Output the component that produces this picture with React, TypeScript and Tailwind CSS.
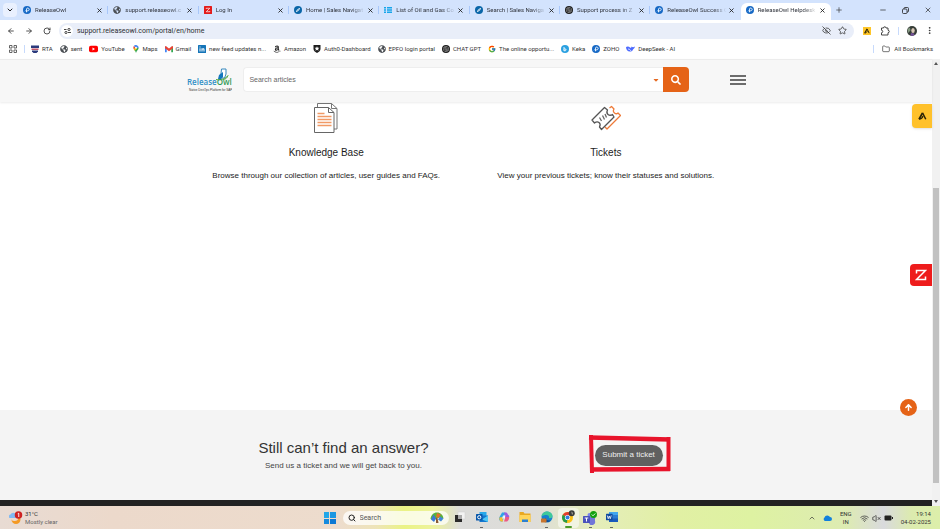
import type { ReactNode } from 'react';
import {
  ArrowLeft,
  ArrowRight,
  ArrowUp,
  ChevronDown,
  ChevronUp,
  EyeOff,
  Folder,
  Minus,
  MoreVertical,
  Plus,
  RotateCw,
  Search,
  Star,
  VolumeX,
  Wifi,
  X,
} from 'lucide-react';
import { FcGoogle } from 'react-icons/fc';
import { FaAmazon, FaCaretDown, FaGlobeAmericas, FaSearch } from 'react-icons/fa';
import { SiOpenai } from 'react-icons/si';

const UI = 'font-[Roboto,sans-serif]';
const ARIAL = "font-['Liberation_Sans',Arial,sans-serif]";

/* ---------- site icons ---------- */

function OwlIcon() {
  return (
    <svg viewBox="0 0 16 16" className="size-2 shrink-0">
      <circle cx="8" cy="8" r="8" fill="#1769c5" />
      <path d="M7 12.500V5.500a2.800 2.800 0 1 1 2.500 4.200H7" fill="none" stroke="#fff" strokeWidth="1.800" />
      <path d="M4 11l3-4" stroke="#9fd0ff" strokeWidth="1.500" />
    </svg>
  );
}

function CompassIcon() {
  return (
    <svg viewBox="0 0 16 16" className="size-2 shrink-0">
      <circle cx="8" cy="8" r="8" fill="#0a66a8" />
      <path d="M12.500 3.500L9.700 9.700 3.500 12.500 6.300 6.300z" fill="#fff" />
      <circle cx="8" cy="8" r="1.300" fill="#0a66a8" />
    </svg>
  );
}

function GlobeIcon() {
  return <FaGlobeAmericas className="size-2 shrink-0 text-[#4b4f54]" />;
}

function ZohoIcon() {
  return (
    <svg viewBox="0 0 16 16" className="size-2 shrink-0">
      <rect width="16" height="16" rx="1" fill="#e31b1b" />
      <path d="M4.500 6V4.500h7L4.500 11.500h7V10" fill="none" stroke="#fff" strokeWidth="1.400" />
    </svg>
  );
}

function ListIcon() {
  return (
    <svg viewBox="0 0 16 14" className="size-2 shrink-0" fill="#17a5ea">
      <path d="M0 1h4v3H0zM6 1h10v3H6zM0 5.500h4v3H0zM6 5.500h10v3H6zM0 10h4v3H0zM6 10h10v3H6z" />
    </svg>
  );
}

function ChatIcon() {
  return (
    <span className="flex size-2 shrink-0 items-center justify-center rounded-full bg-[#1c1c1c]">
      <SiOpenai className="size-1.5 text-[#b0b0b0]" />
    </span>
  );
}

function RtaIcon() {
  return (
    <svg viewBox="0 0 16 16" className="size-2 shrink-0">
      <path d="M0 1h16v5H0z" fill="#2b3a7c" />
      <path d="M1 7h14v3H1z" fill="#c2566a" />
      <path d="M2 11h12v2l-3 3H5l-3-3z" fill="#2b3a7c" />
    </svg>
  );
}

function YouTubeIcon() {
  return (
    <svg viewBox="0 0 18 16" className="h-2 w-[9px] shrink-0">
      <rect y="1.500" width="18" height="13" rx="3.500" fill="#f00" />
      <path d="M7 5l5 3-5 3z" fill="#fff" />
    </svg>
  );
}

function MapsIcon() {
  return (
    <svg viewBox="0 0 14 18" className="size-2 shrink-0">
      <path d="M1.500 8.600L7 4l6 2c0 5-5 6-6 12-.600-4-4-6-5.500-9.400z" fill="#34a853" />
      <path d="M1.500 8.600L6 4l3 4-4.500 5z" fill="#fbbc04" />
      <path d="M2.200 2.400A6 6 0 0 0 1.500 8.600L7 6z" fill="#ea4335" />
      <path d="M2.200 2.400A6 6 0 0 1 13 6L7 6z" fill="#4285f4" />
      <circle cx="7" cy="6" r="2.200" fill="#fff" />
    </svg>
  );
}

function GmailIcon() {
  return (
    <svg viewBox="0 0 16 13" className="size-2 shrink-0">
      <path d="M0 2h3.500v11H0z" fill="#4285f4" />
      <path d="M12.500 2H16v11h-3.500z" fill="#34a853" />
      <path d="M0 1.500L1.500.5 8 5.500l6.500-5L16 1.500V5l-8 6L0 5z" fill="#ea4335" />
    </svg>
  );
}

function LinkedInIcon() {
  return (
    <svg viewBox="0 0 16 16" className="size-2 shrink-0">
      <rect width="16" height="16" rx="1" fill="#1474b8" />
      <path d="M3 6.500h2V13H3zM3 3h2v2H3zM7 6.500h2v1c1.500-2 4-1 4 1.500v4h-2V9.500c0-1.800-2-1.500-2 0V13H7z" fill="#fff" />
    </svg>
  );
}

function AuthIcon() {
  return (
    <svg viewBox="0 0 16 16" className="size-2 shrink-0">
      <path d="M1 0h14v8c0 4-4 6.500-7 8-3-1.500-7-4-7-8z" fill="#1d1d1d" />
      <path d="M8 2.500l1.400 3.200h3.400L10.200 8l.9 3.500L8 9.500l-3.100 2L5.800 8 3.200 5.700h3.400z" fill="#fff" />
    </svg>
  );
}

function KekaIcon() {
  return (
    <svg viewBox="0 0 16 16" className="size-2 shrink-0">
      <circle cx="8" cy="8" r="8" fill="#2aa0e0" />
      <path d="M6 4v8M6 9a2 2 0 1 1 2.500 2.500H6" fill="none" stroke="#fff" strokeWidth="1.800" />
    </svg>
  );
}

function DeepSeekIcon() {
  return (
    <svg viewBox="0 0 18 16" className="h-2 w-[9px] shrink-0">
      <path d="M0 4c3-2 6-1 8 1 1 1 3 1 3-2 2 2 4 2 7 0-1 4-3 5-4 6-1 3-3 4-6 4-5 0-8-4-8-9z" fill="#4d6bfe" />
      <path d="M4 8c3 0 5 2 6 4" fill="none" stroke="#fff" strokeWidth="1.500" />
    </svg>
  );
}

function ApolloMark({ className }: { className: string }) {
  return (
    <svg viewBox="0 0 18 16" className={className} fill="none" stroke="#2a2207">
      <path d="M2 14.500L9 2" strokeWidth="3.400" />
      <path d="M9 1.500l6.500 13" strokeWidth="3" />
      <path d="M2 14c4 0 7-2 8-6" strokeWidth="2.200" />
    </svg>
  );
}

/* ---------- browser chrome ---------- */

const tabs: { title: string; icon: ReactNode; active?: boolean }[] = [
  { title: 'ReleaseOwl', icon: <OwlIcon /> },
  { title: 'support.releaseowl.c', icon: <GlobeIcon /> },
  { title: 'Log In', icon: <ZohoIcon /> },
  { title: 'Home | Sales Navigat', icon: <CompassIcon /> },
  { title: 'List of Oil and Gas Co', icon: <ListIcon /> },
  { title: 'Search | Sales Naviga', icon: <CompassIcon /> },
  { title: 'Support process in Z', icon: <ChatIcon /> },
  { title: 'ReleaseOwl Success C', icon: <OwlIcon /> },
  { title: 'ReleaseOwl Helpdesk', icon: <OwlIcon />, active: true },
];

function TabStrip() {
  return (
    <div className="flex h-5 bg-[#d3e3fd]">
      <div className="flex w-[18px] shrink-0 items-center pl-[3px]">
        <button aria-label="Search tabs" className="flex size-[14px] items-center justify-center rounded bg-[#e9f0fe]">
          <ChevronDown className="size-2 text-[#222]" strokeWidth={3} />
        </button>
      </div>
      <div role="tablist" className="grid min-w-0 flex-1 grid-cols-9">
        {tabs.map((t, i) => (
          <div
            key={t.title}
            className={
              t.active
                ? 'mt-[3px] flex min-w-0 items-center rounded-t-md bg-white pr-[5px] pb-[3px] pl-[5px]'
                : 'flex min-w-0 items-center pl-[5px]'
            }
          >
            <button role="tab" aria-selected={!!t.active} className="flex min-w-0 flex-1 items-center gap-1 text-left">
              {t.icon}
              <span className="flex-1 overflow-hidden text-[6px] leading-[10px] whitespace-nowrap text-[#30343c] [mask-image:linear-gradient(to_right,#000_75%,transparent_98%)]">
                {t.title}
              </span>
            </button>
            <button aria-label={`Close ${t.title}`} className="flex w-2 justify-center">
              <X className="size-[7px] text-[#222]" strokeWidth={3} />
            </button>
            {!t.active && <span className={i === 7 ? 'w-[5px]' : 'ml-1 h-2 w-px bg-[#a8c7fa]'} />}
          </div>
        ))}
      </div>
      <div className="flex w-[109px] shrink-0 items-center justify-between pr-2 pl-1">
        <button aria-label="New tab"><Plus className="size-2 text-[#333]" /></button>
        <div className="flex items-center gap-[15px]">
          <button aria-label="Minimize"><Minus className="size-2 text-[#222]" /></button>
          <button aria-label="Restore">
            <svg viewBox="0 0 14 14" className="size-[7px]" fill="none" stroke="#222" strokeWidth="1.600">
              <rect x="1" y="4" width="9" height="9" rx="2" />
              <path d="M4 4V3a2 2 0 0 1 2-2h5a2 2 0 0 1 2 2v5a2 2 0 0 1-2 2h-1" />
            </svg>
          </button>
          <button aria-label="Close window"><X className="size-2 text-[#222]" /></button>
        </div>
      </div>
    </div>
  );
}

function Toolbar() {
  return (
    <div className="flex h-[21px] items-center bg-white pr-1.5 pl-[7px]">
      <div className="flex w-[52px] items-center gap-[10px]">
        <button aria-label="Back"><ArrowLeft className="size-2 text-[#333]" strokeWidth={2.5} /></button>
        <button aria-label="Forward"><ArrowRight className="size-2 text-[#333]" strokeWidth={2.5} /></button>
        <button aria-label="Reload"><RotateCw className="size-2 text-[#333]" strokeWidth={2.5} /></button>
      </div>
      <div className="flex h-4 flex-1 items-center gap-1 rounded-full bg-[#e9eef9] pr-[7px] pl-[2px]">
        <button aria-label="Site information" className="flex size-3 items-center justify-center rounded-full bg-white">
          <svg viewBox="0 0 14 12" className="h-1.5 w-[7px]" fill="none" stroke="#333" strokeWidth="1.800">
            <path d="M0 3h5M8 9h6" />
            <circle cx="10" cy="3" r="2.200" />
            <circle cx="4" cy="9" r="2.200" />
          </svg>
        </button>
        <input
          aria-label="Address"
          defaultValue="support.releaseowl.com/portal/en/home"
          className="min-w-0 flex-1 bg-transparent text-[7px] leading-[10px] text-[#2b2e33] outline-none"
        />
        <button aria-label="Tracking blocked"><EyeOff className="size-[9px] text-[#333]" /></button>
        <button aria-label="Bookmark this page" className="ml-[3px]"><Star className="size-[9px] text-[#333]" /></button>
      </div>
      <div className="ml-[9px] flex items-center">
        <button aria-label="Apollo" className="flex size-2 items-center justify-center bg-[#ffc629]">
          <ApolloMark className="size-1.5" />
        </button>
        <button aria-label="Extensions" className="ml-[9px]">
          <svg viewBox="0 0 20 20" className="size-[10px]" fill="none" stroke="#333" strokeWidth="1.800">
            <path d="M3 4h4a2.500 2.500 0 0 1 5 0h4v4.500a2.500 2.500 0 0 1 0 5V18H3v-4.500a2.500 2.500 0 0 0 0-5z" />
          </svg>
        </button>
        <span className="ml-2 h-2 w-px bg-[#c7dafc]" />
        <button aria-label="Profile" className="ml-2">
          <svg viewBox="0 0 20 20" className="size-[10px]">
            <circle cx="10" cy="10" r="10" fill="#353c36" />
            <ellipse cx="12" cy="9" rx="3.500" ry="5" fill="#d8c6b6" />
            <path d="M1 6l5-3 1 6-5 5z" fill="#839780" />
            <path d="M8 14l6 1 1 3-5 2-3-1z" fill="#735099" />
          </svg>
        </button>
        <button aria-label="Menu" className="ml-2"><MoreVertical className="size-[9px] text-[#222]" /></button>
      </div>
    </div>
  );
}

const bookmarks: { label: string; icon: ReactNode }[] = [
  { label: 'RTA', icon: <RtaIcon /> },
  { label: 'sent', icon: <GlobeIcon /> },
  { label: 'YouTube', icon: <YouTubeIcon /> },
  { label: 'Maps', icon: <MapsIcon /> },
  { label: 'Gmail', icon: <GmailIcon /> },
  { label: 'new feed updates n...', icon: <LinkedInIcon /> },
  { label: 'Amazon', icon: <FaAmazon className="size-2 shrink-0 text-[#222]" /> },
  { label: 'Auth0-Dashboard', icon: <AuthIcon /> },
  { label: 'EPFO login portal', icon: <GlobeIcon /> },
  { label: 'CHAT GPT', icon: <ChatIcon /> },
  { label: 'The online opportu...', icon: <FcGoogle className="size-2 shrink-0" /> },
  { label: 'Keka', icon: <KekaIcon /> },
  { label: 'ZOHO', icon: <OwlIcon /> },
  { label: 'DeepSeek - AI', icon: <DeepSeekIcon /> },
];

function Bookmarks() {
  return (
    <nav aria-label="Bookmarks" className="flex h-[18px] items-center bg-white pr-[7px] pb-[2px] pl-[9px] text-[6px] leading-[10px] text-[#333]">
      <button aria-label="Apps" className="w-[15px]">
        <svg viewBox="0 0 16 16" className="size-2" fill="none" stroke="#555" strokeWidth="1.800">
          <path d="M1 1h5v5H1zM10 1h5v5h-5zM1 10h5v5H1zM10 10h5v5h-5z" />
        </svg>
      </button>
      <span className="mr-1.5 h-2 w-px bg-[#c7dafc]" />
      <div className="flex flex-1 gap-[7px]">
        {bookmarks.map((b) => (
          <a key={b.label} href="#" className="flex items-center gap-[3px] whitespace-nowrap">
            {b.icon}
            {b.label}
          </a>
        ))}
      </div>
      <span className="mr-2 h-2 w-px bg-[#c7dafc]" />
      <button className="flex items-center gap-1 whitespace-nowrap">
        <Folder className="size-2" />
        All Bookmarks
      </button>
    </nav>
  );
}

/* ---------- help centre page ---------- */

function Logo() {
  return (
    <a href="#" aria-label="ReleaseOwl home" className="block shrink-0">
      <svg viewBox="0 0 46 24" className="h-6 w-[46px]">
        <path d="M35.500 1h4.500v5l-1.500 4h-4z" fill="#fff" stroke="#3487bd" strokeWidth="1" />
        <path d="M33 7l4-3v5l-2 2h-3z" fill="#1377bd" />
        <path d="M30 11.500c5 1 10-1 12-4-1 3-3 4-5 4" fill="none" stroke="#58a946" strokeWidth="1" />
        <text x="1" y="17" fontSize="8" fontWeight="600" fill="#318fc6" fontFamily="Open Sans, sans-serif">
          Release
          <tspan fill="#2f9a55">Owl</tspan>
        </text>
        <text x="3" y="23" fontSize="3" fill="#333" fontFamily="Liberation Sans, sans-serif">Native DevOps Platform for SAP</text>
      </svg>
    </a>
  );
}

function SiteHeader() {
  return (
    <header className="relative z-10 h-[43px] border-t border-[#ececec] bg-[#f7f7f7] pb-[3px] shadow-[0_1px_2px_rgba(0,0,0,0.08)]">
      <div className="mx-auto flex h-full w-3/5 items-center">
        <Logo />
        <form className="ml-[11px] flex h-[25px] flex-1" onSubmit={(e) => e.preventDefault()}>
          <div className="flex flex-1 items-center rounded-l-sm border border-r-0 border-[#eee] bg-white pr-[3px] pl-[5px]">
            <input
              aria-label="Search articles"
              placeholder="Search articles"
              className="min-w-0 flex-1 bg-transparent text-[7px] leading-[10px] outline-none placeholder:text-[#666]"
            />
            <button type="button" aria-label="Choose section">
              <FaCaretDown className="size-2 text-[#e66a22]" />
            </button>
          </div>
          <button aria-label="Search" className="flex w-[26px] items-center justify-center rounded-r-sm bg-[#e56317]">
            <FaSearch className="size-[10px] text-white" />
          </button>
        </form>
        <button aria-label="Open menu" className="ml-[41px] flex w-4 flex-col gap-[2px]">
          <span className="h-[2px] w-full bg-[#6c6c6c]" />
          <span className="h-[2px] w-full bg-[#6c6c6c]" />
          <span className="h-[2px] w-full bg-[#6c6c6c]" />
        </button>
      </div>
    </header>
  );
}

function ArticlesIcon() {
  return (
    <svg viewBox="0 0 26 32" className="h-8 w-[26px]" fill="none">
      <path d="M4.500 5V1.500h14l5.500 5V27H21" stroke="#777" />
      <path d="M18.500 1.500v5H24" stroke="#777" />
      <path d="M1.500 5.500h14l5.500 5v20H1.500z" fill="#fff" stroke="#666" />
      <path d="M15.500 5.500v5H21" stroke="#666" />
      <path d="M4.500 11.500h7M4.500 14.500h14M4.500 17.500h14M4.500 20.500h14M4.500 23.500h14" stroke="#f19a66" strokeWidth="1.500" />
    </svg>
  );
}

function TicketsIcon() {
  return (
    <svg viewBox="0 0 30 26" className="h-[26px] w-[30px]" fill="none" strokeWidth="1.300" strokeLinejoin="round">
      <path
        d="M18.500 3L20.500 1.500l2.500 2.500q-1.500 2.500.500 4t3.500 0l2.500 2.500L16 24l-2-2"
        stroke="#ee7a38"
      />
      <path
        d="M1 15L13.500 2.500l3 2.500q-1.500 3 .500 4.500t4.500 0l1.500 2.500L10.500 24.500l-2-2.500q1.500-3-.500-4.500t-4.500.500z"
        fill="#fff"
        stroke="#555"
      />
      <path d="M8.500 12.500l2 3.500M11.500 10.500l2 4M14 9l1.500 3.500" stroke="#666" />
    </svg>
  );
}

function Topic({ icon, title, text }: { icon: ReactNode; title: string; text: string }) {
  return (
    <a href="#" className="flex flex-col items-center whitespace-nowrap text-[#1c1c1c]">
      <span className="flex h-8 items-center">{icon}</span>
      <h2 className="mt-3 text-[10px] leading-[14px]">{title}</h2>
      <p className="mt-2.5 text-[8px] leading-3">{text}</p>
    </a>
  );
}

function Topics() {
  return (
    <main className="h-[308px]">
      <div className="mx-auto grid w-3/5 grid-cols-2 justify-items-center">
        <Topic icon={<ArticlesIcon />} title="Knowledge Base" text="Browse through our collection of articles, user guides and FAQs." />
        <Topic icon={<TicketsIcon />} title="Tickets" text="View your previous tickets; know their statuses and solutions." />
      </div>
    </main>
  );
}

function HelpBanner() {
  return (
    <section className="h-[90px] bg-[#f4f4f4]">
      <div className="mx-auto flex h-full w-3/5 items-center justify-between pr-[83px] pl-[72px]">
        <div className="text-center whitespace-nowrap">
          <h2 className="text-[15px] leading-5 text-[#333]">Still can’t find an answer?</h2>
          <p className="mt-0.5 text-[8px] leading-3 text-[#444]">Send us a ticket and we will get back to you.</p>
        </div>
        <div className="relative">
          <button className="block h-[21px] w-[68px] rounded-full bg-[#606060] text-[8px] leading-3 whitespace-nowrap text-[#eee]">
            Submit a ticket
          </button>
          <svg viewBox="0 0 84 40" className="pointer-events-none absolute -top-[11px] -left-[7px] h-10 w-[84px]" fill="none" stroke="#e8142b">
            <path d="M1 3.500L82 5.500" strokeWidth="4.500" />
            <path d="M80.500 3v34" strokeWidth="4" />
            <path d="M82 35L2 35.500" strokeWidth="4.500" />
            <path d="M3 1L4 39" strokeWidth="4" />
          </svg>
        </div>
      </div>
    </section>
  );
}

function Scrollbar() {
  return (
    <div aria-hidden="true" className="flex w-2 shrink-0 flex-col items-center bg-[#f1f1f1]">
      <svg viewBox="0 0 8 10" className="h-[10px] w-2"><path d="M2 6l2-3 2 3z" fill="#555" /></svg>
      <div className="mt-[119px] h-[295px] w-1.5 bg-[#c1c1c1]" />
      <svg viewBox="0 0 8 10" className="mt-auto h-[10px] w-2"><path d="M2 4l2 3 2-3z" fill="#555" /></svg>
    </div>
  );
}

function Page() {
  return (
    <div className={`flex ${ARIAL}`}>
      <div className="relative min-w-0 flex-1 bg-white">
        <SiteHeader />
        <Topics />
        <HelpBanner />
        <div className="h-1.5 bg-[#222]" />
        <button aria-label="Apollo" className="absolute top-[45px] right-0 flex h-6 w-5 items-center justify-center rounded-l bg-[#ffc12b] shadow-sm">
          <ApolloMark className="h-2 w-[9px]" />
        </button>
        <button aria-label="Zia" className="absolute top-[205px] right-0 flex size-[22px] items-center justify-center rounded-l-sm bg-[#ee1c1c]">
          <svg viewBox="0 0 12 12" className="size-3" fill="none" stroke="#fff" strokeWidth="1.500">
            <path d="M1.500 4.500V1.500h9L1.500 10.500h9v-3" />
          </svg>
        </button>
        <button aria-label="Back to top" className="absolute top-[340px] right-[15px] flex size-[17px] items-center justify-center rounded-full bg-[#e56317]">
          <ArrowUp className="size-[9px] text-white" strokeWidth={4} />
        </button>
      </div>
      <Scrollbar />
    </div>
  );
}

/* ---------- taskbar ---------- */

function TaskViewIcon() {
  return (
    <svg viewBox="0 0 24 24" className="size-3">
      <path d="M8 2h14v14H8z" fill="#f3f3f3" stroke="#ccc" />
      <path d="M2 8h6v8h8v6H2z" fill="#2a2a2a" />
      <path d="M8 8h8v8H8z" fill="#aaa" />
    </svg>
  );
}

function OutlookIcon() {
  return (
    <svg viewBox="0 0 24 24" className="size-3">
      <path d="M7 2h14v11H7z" fill="#28a8ea" />
      <path d="M7 9h17v13H7z" fill="#1277cf" />
      <path d="M24 9L12 17l12 5z" fill="#50c8f5" />
      <rect y="6" width="13" height="13" rx="1" fill="#0a58ab" />
      <circle cx="6.500" cy="12.500" r="3.200" fill="none" stroke="#fff" strokeWidth="2" />
    </svg>
  );
}

function CopilotIcon() {
  return (
    <svg viewBox="0 0 24 24" className="size-3">
      <path d="M8 3h7l-3 9-3 9H7c-4 0-6-5-4-9z" fill="#2fa4e6" />
      <path d="M3 13l6-1 1 9H7c-3 0-5-4-4-8z" fill="#f6c02f" />
      <path d="M12 3h4c3 0 3 4 5 5 3 3 1 6-1 8l-5-1z" fill="#9a5be0" />
      <path d="M12 21l3-9h7c1 4-2 9-5 9z" fill="#ee5b84" />
      <path d="M10 9h5l-2 6H8z" fill="#fff" opacity=".85" />
    </svg>
  );
}

function ExplorerIcon() {
  return (
    <svg viewBox="0 0 24 24" className="size-3">
      <path d="M1 2h8l2 3h12v17H1z" fill="#e9a820" />
      <path d="M1 8h22v14H1z" fill="#ffd45a" />
      <path d="M6 17h12v5H6z" fill="#2c80d0" />
    </svg>
  );
}

function EdgeIcon() {
  return (
    <svg viewBox="0 0 24 24" className="size-3">
      <circle cx="12" cy="12" r="11" fill="#1681cf" />
      <path d="M1 11C2 4 7 1 12 1c7 0 11 5 11 9 0 4-4 5-7 4 1-4-2-6-5-6-4 0-8 1-10 3z" fill="#3fc99a" />
      <path d="M9 13c0 4 4 7 10 6-3 4-10 4-13 1z" fill="#0b4c96" />
      <rect y="15" width="11" height="8" rx="1" fill="#c7752e" />
    </svg>
  );
}

function ChromeIcon() {
  return (
    <svg viewBox="0 0 28 28" className="size-[14px]">
      <circle cx="13" cy="15" r="11" fill="#fbc116" />
      <path d="M13 15L3.500 9.500A11 11 0 0 1 23 10z" fill="#e33b2e" />
      <path d="M13 15L3.500 9.500A11 11 0 0 0 12 26z" fill="#269b4a" />
      <circle cx="13" cy="15" r="5.200" fill="#fff" />
      <circle cx="13" cy="15" r="4" fill="#2f7de1" />
      <circle cx="21.500" cy="6.500" r="6" fill="#3a3d3a" />
      <path d="M21 3q4 3 1 7z" fill="#dcd2c4" />
    </svg>
  );
}

function TeamsIcon() {
  return (
    <svg viewBox="0 0 28 28" className="size-[14px]">
      <circle cx="13" cy="8" r="4" fill="#7b83eb" />
      <path d="M9 12h15v8a6 6 0 0 1-12 4z" fill="#7176d8" />
      <rect y="10" width="14" height="14" rx="1" fill="#4b53bc" />
      <path d="M3.500 14h7M7 14v7" stroke="#fff" strokeWidth="2" />
      <circle cx="21" cy="7" r="7" fill="#13a10e" />
      <path d="M17.500 7l2.500 2.500 4.500-4.500" fill="none" stroke="#fff" strokeWidth="1.800" />
    </svg>
  );
}

function WordIcon() {
  return (
    <svg viewBox="0 0 24 24" className="size-3">
      <path d="M6 2h18v7H6z" fill="#41a5ee" />
      <path d="M6 8h18v8H6z" fill="#2b7cd3" />
      <path d="M6 15h18v7H6z" fill="#185abd" />
      <rect y="5.500" width="13" height="13" rx="1" fill="#114a9e" />
      <path d="M2.500 9l2 6.500 2-5.500 2 5.500 2-6.500" fill="none" stroke="#fff" strokeWidth="1.600" />
    </svg>
  );
}

const apps: { name: string; icon: ReactNode; state?: 'open' | 'active' }[] = [
  { name: 'Task view', icon: <TaskViewIcon /> },
  { name: 'Outlook', icon: <OutlookIcon />, state: 'open' },
  { name: 'Copilot', icon: <CopilotIcon /> },
  { name: 'File Explorer', icon: <ExplorerIcon /> },
  { name: 'Edge', icon: <EdgeIcon />, state: 'open' },
  { name: 'Chrome', icon: <ChromeIcon />, state: 'active' },
  { name: 'Teams', icon: <TeamsIcon />, state: 'open' },
  { name: 'Word', icon: <WordIcon />, state: 'open' },
];

function Taskbar() {
  return (
    <footer className="flex h-6 items-center bg-[linear-gradient(to_right,#e8dbd3_0%,#ecd9cb_12%,#eddccd_36%,#eee4b8_40%,#eaf385_43%,#edf39c_46%,#dcdcda_49%,#deddd9_57%,#e5edbb_63%,#e1f0a4_72%,#def2a2_80%,#ddebb2_90%,#d9dadd_94%,#dcebae_97%,#dcefaa_100%)] px-[9px] text-[6px] leading-2 text-[#333]">
      <div className="flex flex-1 items-center gap-[2px]">
        <svg viewBox="0 0 28 28" className="size-[14px]">
          <circle cx="14" cy="17" r="9" fill="#f49a24" />
          <circle cx="11" cy="12" r="8" fill="#edd9cd" />
          <path d="M1 14a4 4 0 0 1 2-7 6 6 0 0 1 11 0v7z" fill="#82baf2" />
          <circle cx="19" cy="8" r="7.500" fill="#ce2121" />
          <path d="M17.500 5.500l2-1V12" fill="none" stroke="#fff" strokeWidth="1.800" />
        </svg>
        <div className="whitespace-nowrap">
          <div>31°C</div>
          <div className="text-[#666]">Mostly clear</div>
        </div>
      </div>
      <div className="flex items-center pl-1.5">
        <button aria-label="Start" className="grid size-3 grid-cols-2 gap-px">
          <span className="bg-[#22a7e8]" />
          <span className="bg-[#1b97e2]" />
          <span className="bg-[#158ade]" />
          <span className="bg-[#0c78d4]" />
        </button>
        <label className="ml-[7px] flex h-[14px] w-[106px] items-center gap-1 rounded-full bg-white/75 px-[5px]">
          <Search className="size-2 text-[#222]" strokeWidth={3} />
          <input aria-label="Search Windows" placeholder="Search" className="min-w-0 flex-1 bg-transparent text-[7px] leading-[10px] outline-none placeholder:text-[#555]" />
          <svg viewBox="0 0 28 24" className="h-3 w-[14px]">
            <path d="M1 14C2 6 7 1 14 1s12 5 13 12l-8-2-6 2-5 4z" fill="#58b23c" />
            <path d="M2 15l5-10 5 8-4 7z" fill="#3b77d8" />
            <path d="M14 2l8 3-5 7-5-2z" fill="#df7228" />
            <path d="M20 9l7 4-5 6-6-4z" fill="#4286d8" />
            <path d="M12 12h3l2 10h-5z" fill="#8a5b33" />
          </svg>
        </label>
        <div className="ml-[1px] flex w-[173px]">
          {apps.map((a) => (
            <button
              key={a.name}
              aria-label={a.name}
              className={
                a.state === 'active'
                  ? 'flex h-5 flex-1 flex-col items-center justify-between rounded-sm bg-white/50 pt-[2px]'
                  : 'flex h-5 flex-1 flex-col items-center justify-between pt-[3px]'
              }
            >
              {a.icon}
              {a.state === 'active' && <span className="h-[2px] w-[7px] rounded bg-[#4c9a28]" />}
              {a.state === 'open' && <span className="h-px w-[3px] bg-[#666]" />}
            </button>
          ))}
        </div>
      </div>
      <div className="flex flex-1 items-center justify-end">
        <button aria-label="Show hidden icons"><ChevronUp className="size-2" /></button>
        <svg viewBox="0 0 18 12" className="ml-[7px] h-1.5 w-[9px]">
          <path d="M4 12a4 4 0 0 1-1-7 6 6 0 0 1 11-1 4 4 0 0 1 0 8z" fill="#1280dc" />
        </svg>
        <div className="ml-2 text-center">
          ENG
          <br />
          IN
        </div>
        <div className="ml-2 flex items-center gap-[3px]">
          <Wifi className="size-[9px]" />
          <VolumeX className="size-[9px]" />
          <svg viewBox="0 0 18 12" className="h-1.5 w-[9px]">
            <rect x="1" y="1" width="14" height="10" rx="2" fill="#222" />
            <path d="M16 4h2v4h-2z" fill="#222" />
          </svg>
        </div>
        <div className="ml-2 text-right whitespace-nowrap">
          19:14
          <br />
          04-02-2025
        </div>
      </div>
    </footer>
  );
}

export default function App() {
  return (
    <div className={`w-full ${UI}`}>
      <TabStrip />
      <Toolbar />
      <Bookmarks />
      <Page />
      <Taskbar />
    </div>
  );
}
